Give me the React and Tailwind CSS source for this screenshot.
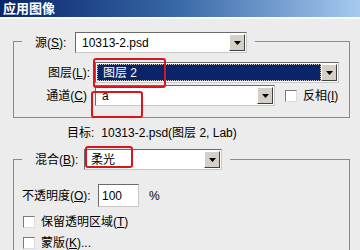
import React from 'react';

const Arrow = () => (
  <div className="w-[16px] h-full bg-[#d4d0c8] border-t border-l border-t-white border-l-white border-r border-b border-r-[#404040] border-b-[#404040] flex items-center justify-center">
    <svg width="7" height="4" viewBox="0 0 7 4">
      <path d="M0 0h7L3.5 4z" fill="#000" />
    </svg>
  </div>
);

const Select = ({ width, value, selected }) => (
  <div
    className="h-[21px] flex bg-white border border-[#6a6a6a] border-r-[#c8c8c8] border-b-[#c8c8c8] p-px"
    style={{ width }}
  >
    <div className={`flex-1 flex items-center ${selected ? 'bg-[#0a246a] text-white border border-dotted border-[#c9c9c9] pl-[5px]' : 'pl-[5px]'}`}>
      {value}
    </div>
    <Arrow />
  </div>
);

const Check = () => (
  <div className="w-[12px] h-[12px] bg-white border border-[#7a7a7a] border-r-[#dcdcdc] border-b-[#dcdcdc]" />
);

export default function App() {
  return (
    <div className="relative w-[360px] h-[250px] overflow-hidden bg-[#ececec] text-[12px] leading-none text-black font-['Liberation_Sans','Noto_Sans_CJK_SC',sans-serif]">
      {/* title bar */}
      <div className="h-[17px] bg-gradient-to-r from-[#0a246a] via-[#3a6aa8] to-[#a6caf0] flex items-center pl-[3px]">
        <span className="text-white font-bold text-[13px]">应用图像</span>
      </div>
      <div className="h-[2px] bg-[#fafafa]" />

      {/* source group */}
      <div className="ml-[13px] w-[337px] mt-[13px]">
        <div className="flex h-[21px]">
          <div className="w-[9px] h-[12px] self-end border-t border-l border-[#8a8a8a]" />
          <div className="ml-[13px] w-[40px] flex items-center">
            源(<u>S</u>):
          </div>
          <Select width={172} value="10313-2.psd" />
          <div className="ml-[8px] flex-1 h-[12px] self-end border-t border-r border-[#8a8a8a]" />
        </div>
        <div className="h-[65px] border-l border-r border-b border-[#8a8a8a] pt-[9px]">
          <div className="flex items-center">
            <div className="w-[78px] text-right pr-[2px]">
              图层(<u>L</u>):
            </div>
            <div className="ml-[3px]">
              <Select width={244} value="图层 2" selected />
            </div>
          </div>
          <div className="flex items-center mt-[2px]">
            <div className="w-[78px] text-right pr-[5px]">
              通道(<u>C</u>)
            </div>
            <div className="ml-[3px]">
              <Select width={180} value="a" />
            </div>
            <div className="ml-[10px]">
              <Check />
            </div>
            <span className="ml-[6px]">
              反相(<u>I</u>)
            </span>
          </div>
        </div>
      </div>

      {/* target */}
      <div className="ml-[67px] mt-[8px] flex gap-[7px] h-[14px] items-center">
        <span>目标:</span>
        <span>10313-2.psd(图层 2, Lab)</span>
      </div>

      {/* blend group */}
      <div className="ml-[13px] w-[337px] mt-[9px]">
        <div className="flex h-[21px]">
          <div className="w-[9px] h-[11px] self-end border-t border-l border-[#8a8a8a]" />
          <div className="ml-[13px] w-[49px] flex items-center">
            混合(<u>B</u>):
          </div>
          <Select width={138} value="柔光" />
          <div className="ml-[8px] flex-1 h-[11px] self-end border-t border-r border-[#8a8a8a]" />
        </div>
        <div className="h-[100px] border-l border-r border-[#8a8a8a] pt-[14px] pl-[8px]">
          <div className="flex items-center">
            <span className="w-[76px]">
              不透明度(<u>O</u>):
            </span>
            <div className="w-[41px] h-[23px] bg-white border border-[#6a6a6a] border-r-[#c8c8c8] border-b-[#c8c8c8] flex items-center pl-[3px]">
              100
            </div>
            <span className="ml-[10px]">%</span>
          </div>
          <div className="flex items-center mt-[9px] ml-[1px]">
            <Check />
            <span className="ml-[6px]">
              保留透明区域(<u>T</u>)
            </span>
          </div>
          <div className="flex items-center mt-[9px] ml-[1px]">
            <Check />
            <span className="ml-[6px]">
              蒙版(<u>K</u>)...
            </span>
          </div>
        </div>
      </div>

      {/* red annotation boxes */}
      <div className="absolute left-[93px] top-[58px] w-[73px] h-[30px] border-2 border-[#d8161d] rounded-[3px]" />
      <div className="absolute left-[91px] top-[91px] w-[52px] h-[27px] border-2 border-[#d8161d] rounded-[3px]" />
      <div className="absolute left-[85px] top-[146px] w-[48px] h-[22px] border-2 border-[#d8161d] rounded-[3px]" />
    </div>
  );
}
